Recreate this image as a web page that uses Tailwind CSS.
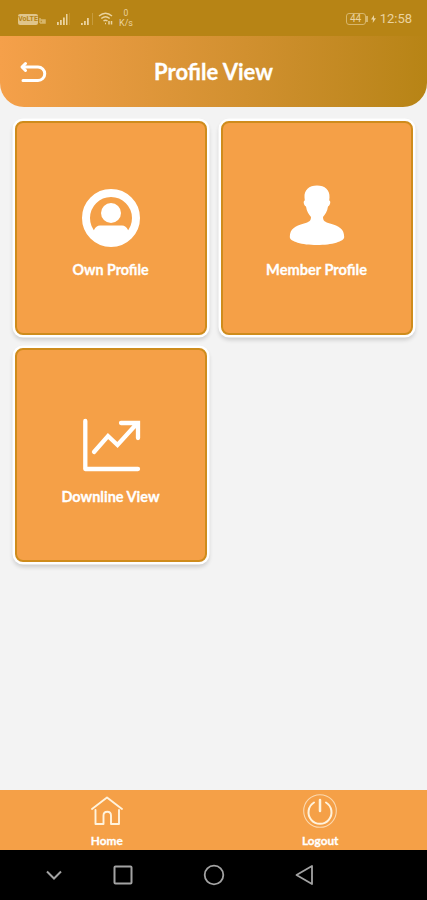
<!DOCTYPE html>
<html lang="en">
<head>
    <meta charset="UTF-8">
    <meta name="viewport" content="width=device-width, initial-scale=1.0">
    <title>Profile View</title>
    <script src="https://cdn.jsdelivr.net/npm/@tailwindcss/browser@4"></script>
</head>
<body class="bg-[#f3f3f3] font-['Lato',sans-serif] text-white">
    <div class="h-[900px] flex flex-col overflow-hidden">
        <!-- Status bar -->
        <div class="h-9 shrink-0 bg-[#b78415] flex items-center justify-between pl-[18px] pr-[15px] font-['Roboto',sans-serif] text-[#ead3a0]">
            <div class="flex items-center">
                <div class="w-5 h-[11px] mt-[2px] rounded-[2px] bg-[#e0c58b] text-[#b78415] text-[7px] leading-[11px] font-bold text-center">VoLTE</div>
                <svg class="w-[7px] h-[7px] mt-1 ml-px" viewBox="0 0 7 7" fill="none" stroke="#d7b66c" stroke-width="1.5"><path d="M1 1v5M1 3h2.500v3H1M6 3H4.500v3H6z"/></svg>
                <svg class="w-[15px] h-[13px] mt-[3px] ml-[10px]" viewBox="0 0 15 13" fill="#ead3a0"><path d="M1 9h1.800v3H1zM4 7h1.800v5H4zM7 4.500h1.800v7.500H7zM10 1h1.500v11H10z"/><path opacity=".2" d="M13 0h1v12h-1z"/></svg>
                <svg class="w-[15px] h-[13px] mt-[3px] ml-[9px]" viewBox="0 0 15 13" fill="#ead3a0"><path d="M1 10h1.800v2H1zM4 8h1.800v4H4zM7 5h1.800v7H7z"/><path opacity=".3" d="M12 0h1v12h-1z"/></svg>
                <svg class="w-4 h-[15px] ml-[3px]" viewBox="0 0 16 15" fill="none" stroke="#ead3a0" stroke-width="1.4"><path d="M1 5Q7.500-.6 14 5M3.300 7.500q4.200-3.500 8.400 0M5.500 10q2-1.700 4 0"/><path d="M7 12.500h1M11 10v3.500M13.500 10v3.500" stroke-width="1.500"/></svg>
                <div class="w-4 ml-[4px] text-center leading-[10px] -mt-[1px]"><div class="text-[8.5px]">0</div><div class="text-[9px]">K/s</div></div>
            </div>
            <div class="flex items-center mt-[2px]">
                <div class="w-[20px] h-[12px] border border-[#d7b66c] rounded-[3px] text-[10px] leading-[10px] text-center">44</div>
                <div class="w-[2px] h-[6px] bg-[#d7b66c]"></div>
                <svg class="w-[5px] h-[8px] ml-[3px] mr-[4px]" viewBox="0 0 5 8" fill="#ead3a0"><path d="M3 0 0 4.500h2L1.700 8 5 3.300H3z"/></svg>
                <span class="text-[13px] leading-4">12:58</span>
            </div>
        </div>

        <!-- Header -->
        <div class="relative h-[71px] shrink-0 flex items-center justify-center bg-linear-to-r from-[#f5a04a] to-[#b78415] rounded-b-[24px]">
            <svg class="absolute left-[19px] top-[24px] w-7 h-6" viewBox="0 0 28 24" fill="none" stroke="#fff" stroke-width="3" stroke-linecap="round" stroke-linejoin="round"><path d="M4 7H19a5.800 5.800 0 0 1 0 13.500H4"/><path d="M6.500 3.500 3 7l3.500 3.500"/></svg>
            <h1 class="text-[22px] leading-7 font-bold mt-px [-webkit-text-stroke:0.3px_white]">Profile View</h1>
        </div>

        <!-- Cards -->
        <div class="grow grid grid-cols-[197px_197px] auto-rows-[219px] gap-x-[9px] gap-y-[8px] pl-3 pt-[11px]">
            <div class="bg-[#f5a047] border-2 border-[#cf8c1c] rounded-[8px] m-[2.5px] ring-[2.5px] ring-white shadow-[0_3px_4px_2px_rgba(0,0,0,0.16)] flex flex-col items-center pt-[65px]">
                <svg class="w-[60px] h-[60px]" viewBox="0 0 60 60"><circle cx="30" cy="30" r="25" fill="none" stroke="#fff" stroke-width="8"/><circle cx="30" cy="25" r="10" fill="#fff"/><path fill="#fff" d="M10 46l3-4q2-4.500 6-4.500h22q4 0 6 4.500l3 4q-8 11-20 11t-20-11z"/></svg>
                <span class="mt-[12px] text-[14.3px] leading-5 font-bold [-webkit-text-stroke:0.3px_white]">Own Profile</span>
            </div>
            <div class="bg-[#f5a047] border-2 border-[#cf8c1c] rounded-[8px] m-[2.5px] ring-[2.5px] ring-white shadow-[0_3px_4px_2px_rgba(0,0,0,0.16)] flex flex-col items-center pt-[60px]">
                <svg class="w-[60px] h-[64px]" viewBox="0 0 60 64" fill="#fff"><path d="M30 2.500c-8 0-13 4.500-12.500 12l.3 3c-2 .5-1 5 1.200 6 .7 5 3 8 5 10.500 0 4-2 5-7 6.500C8 43 2.800 46 2.800 54c0 4.500 12 8 27.200 8s27.200-3.500 27.200-8c0-8-5.200-11-14.200-13.500-5-1.500-7-2.500-7-6.500 2-2.500 4.300-5.500 5-10.500 2.200-1 3.200-5.500 1.200-6l.3-3C43 7 38 2.500 30 2.500z"/></svg>
                <span class="mt-[13px] text-[14.6px] leading-5 font-bold [-webkit-text-stroke:0.3px_white]">Member Profile</span>
            </div>
            <div class="bg-[#f5a047] border-2 border-[#cf8c1c] rounded-[8px] m-[2.5px] ring-[2.5px] ring-white shadow-[0_3px_4px_2px_rgba(0,0,0,0.16)] flex flex-col items-center pt-[65px]">
                <svg class="w-[60px] h-[60px]" viewBox="0 0 60 60" fill="none" stroke="#fff" stroke-width="4.300" stroke-linecap="round"><path d="M4.300 6v48H57" stroke-linejoin="round"/><path d="m13 37 14-16 9.500 9L56 8.500M40 8h17V23"/></svg>
                <span class="mt-[12px] text-[14.5px] leading-5 font-bold [-webkit-text-stroke:0.3px_white]">Downline View</span>
            </div>
        </div>

        <!-- Bottom tabs -->
        <div class="h-[60px] shrink-0 bg-[#f5a047] grid grid-cols-2">
            <div class="flex flex-col items-center">
                <svg class="w-9 h-9 mt-[4px]" viewBox="0 0 36 36" fill="none" stroke="#fff3dd" stroke-width="1.900" stroke-linejoin="round" stroke-linecap="round"><path d="M3 15 18 3.500 33 15"/><path d="M6.500 16v14h8V21.500c0-5 7.500-5 7.500 0V30h8V16"/></svg>
                <span class="mt-[3px] text-[11.8px] leading-4 font-bold [-webkit-text-stroke:0.3px_white]">Home</span>
            </div>
            <div class="flex flex-col items-center">
                <svg class="w-9 h-9 mt-[3px]" viewBox="0 0 36 36" fill="none" stroke="#fff3dd" stroke-linecap="round"><circle cx="18" cy="18" r="16.300" stroke="#fbd9b0" stroke-width="1.100"/><path d="M12 9.500a11.500 11.500 0 1 0 12 0" stroke-width="2"/><path d="M18 7v11" stroke-width="2.500"/></svg>
                <span class="mt-[4px] text-[11.8px] leading-4 font-bold [-webkit-text-stroke:0.3px_white]">Logout</span>
            </div>
        </div>

        <!-- Android navigation -->
        <div class="h-[50px] shrink-0 bg-black flex items-center pl-[44px]">
            <svg class="w-5 h-5" viewBox="0 0 20 20" fill="none" stroke="#a3a3a3" stroke-width="2"><path d="m3 6.500 7 7 7-7"/></svg>
            <svg class="w-5 h-5 ml-[49px]" viewBox="0 0 20 20" fill="none" stroke="#a3a3a3" stroke-width="2"><rect x="1.500" y="1.500" width="17" height="17" rx="1"/></svg>
            <svg class="w-[22px] h-[22px] ml-[70px]" viewBox="0 0 22 22" fill="none" stroke="#a3a3a3" stroke-width="1.800"><circle cx="11" cy="11" r="9.300"/></svg>
            <svg class="w-5 h-[22px] ml-[69px]" viewBox="0 0 20 22" fill="none" stroke="#a3a3a3" stroke-width="1.800" stroke-linejoin="round"><path d="M18 2v18L2.500 11z"/></svg>
        </div>
    </div>
</body>
</html>
